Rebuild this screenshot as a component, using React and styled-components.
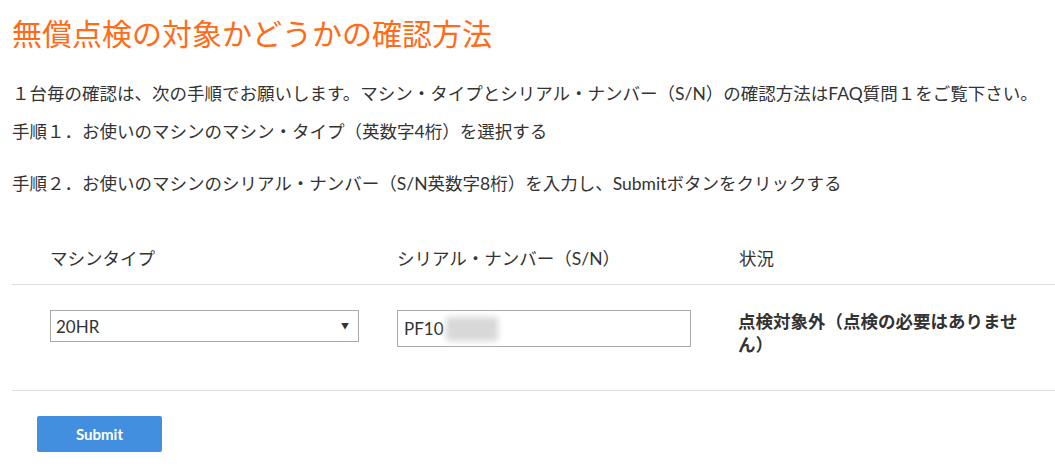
import React from "react";
import styled, { createGlobalStyle } from "styled-components";

const GlobalStyle = createGlobalStyle`
  body {
    margin: 0;
    background: #fff;
    color: #333;
    font-family: Lato, "Noto Sans CJK JP", sans-serif;
  }
`;

const Page = styled.div`
  padding: 12px 0 0 12px;
`;

const Title = styled.h1`
  margin: 0 0 26px;
  font-size: 30px;
  line-height: 42px;
  font-weight: 400;
  color: #ff6b17;
`;

const Text = styled.p`
  margin: 0 0 ${(p) => p.gap}px;
  font-size: 17.5px;
  line-height: 28px;
`;

const Table = styled.div`
  display: grid;
  grid-template-columns: 347px 342px 1fr;
`;

const HeadCell = styled.div`
  height: 52px;
  padding: 12px 30px 0 38px;
  box-sizing: border-box;
  border-bottom: 1px solid #e0e0e0;
  font-size: 17.5px;
  line-height: 28px;
`;

const Cell = styled.div`
  height: 106px;
  padding: 25px 30px 0 ${(p) => (p.bold ? 37 : 38)}px;
  box-sizing: border-box;
  border-bottom: 1px solid #e0e0e0;
  font-size: 17.5px;
  line-height: 23px;
  font-weight: ${(p) => (p.bold ? 700 : 400)};
`;

const SelectWrap = styled.div`
  position: relative;
  width: 309px;
`;

const Select = styled.select`
  appearance: none;
  width: 100%;
  height: 32px;
  padding: 0 30px 0 5px;
  border: 1px solid #a9a9a9;
  border-radius: 0;
  background: #fff;
  color: #333;
  font-family: Lato, "Noto Sans CJK JP", sans-serif;
  font-size: 17px;
`;

const Arrow = styled.span`
  position: absolute;
  right: 10px;
  top: 10px;
  font-size: 8px;
  line-height: 12px;
  color: #333;
  pointer-events: none;
`;

const InputBox = styled.div`
  display: flex;
  align-items: center;
  width: 294px;
  height: 37px;
  padding: 0 6px;
  box-sizing: border-box;
  border: 1px solid #a9a9a9;
  font-size: 17px;
`;

const Hidden = styled.span`
  display: inline-block;
  width: 52px;
  height: 24px;
  margin-left: 2px;
  background: #d8d8d8;
  filter: blur(3px);
`;

const Button = styled.button`
  margin: 25px 0 0 25px;
  width: 125px;
  height: 36px;
  border: none;
  border-radius: 2px;
  background: #418fde;
  color: #fff;
  font-family: Lato, sans-serif;
  font-size: 15px;
  font-weight: 700;
`;

export default function App() {
  return (
    <Page>
      <GlobalStyle />
      <Title>無償点検の対象かどうかの確認方法</Title>
      <Text gap={10}>
        １台毎の確認は、次の手順でお願いします。マシン・タイプとシリアル・ナンバー（S/N）の確認方法はFAQ質問１をご覧下さい。
      </Text>
      <Text gap={24}>手順１．お使いのマシンのマシン・タイプ（英数字4桁）を選択する</Text>
      <Text gap={35}>
        手順２．お使いのマシンのシリアル・ナンバー（S/N英数字8桁）を入力し、Submitボタンをクリックする
      </Text>
      <Table>
        <HeadCell>マシンタイプ</HeadCell>
        <HeadCell>シリアル・ナンバー（S/N）</HeadCell>
        <HeadCell>状況</HeadCell>
        <Cell>
          <SelectWrap>
            <Select defaultValue="20HR">
              <option>20HR</option>
            </Select>
            <Arrow>▼</Arrow>
          </SelectWrap>
        </Cell>
        <Cell>
          <InputBox>
            PF10
            <Hidden />
          </InputBox>
        </Cell>
        <Cell bold>点検対象外（点検の必要はありません）</Cell>
      </Table>
      <Button>Submit</Button>
    </Page>
  );
}
